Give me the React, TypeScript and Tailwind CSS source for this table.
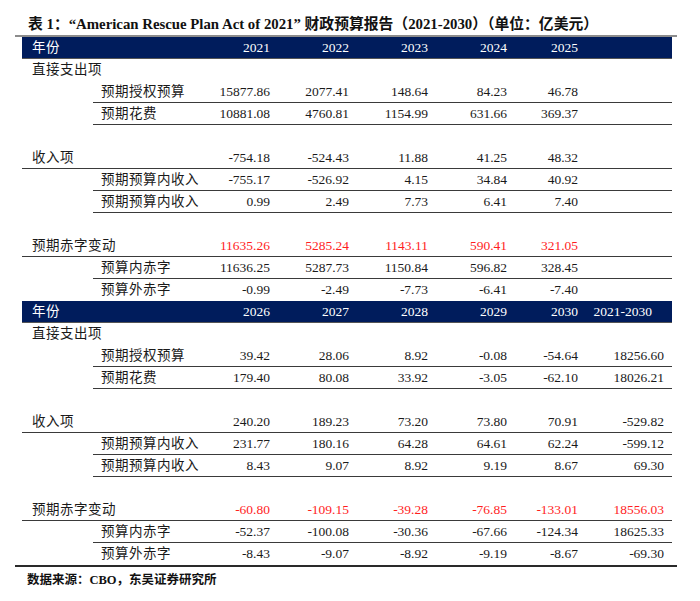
import React from "react";

type RowSpec = {
  label: string;
  values?: string[];
  kind: "top" | "sub" | "blank";
  line?: boolean;
  red?: boolean;
};

const FONT = "font-['Liberation_Serif','Noto_Sans_CJK_SC',serif]";

const COLS = ["w-[70px]", "w-[79px]", "w-[79px]", "w-[79px]", "w-[71px]", "w-[86px]"];

const table1: RowSpec[] = [
  { label: "直接支出项", kind: "top" },
  { label: "预期授权预算", kind: "sub", line: true, values: ["15877.86", "2077.41", "148.64", "84.23", "46.78"] },
  { label: "预期花费", kind: "sub", line: true, values: ["10881.08", "4760.81", "1154.99", "631.66", "369.37"] },
  { label: "", kind: "blank" },
  { label: "收入项", kind: "top", line: true, values: ["-754.18", "-524.43", "11.88", "41.25", "48.32"] },
  { label: "预期预算内收入", kind: "sub", line: true, values: ["-755.17", "-526.92", "4.15", "34.84", "40.92"] },
  { label: "预期预算内收入", kind: "sub", line: true, values: ["0.99", "2.49", "7.73", "6.41", "7.40"] },
  { label: "", kind: "blank" },
  { label: "预期赤字变动", kind: "top", line: true, red: true, values: ["11635.26", "5285.24", "1143.11", "590.41", "321.05"] },
  { label: "预算内赤字", kind: "sub", line: true, values: ["11636.25", "5287.73", "1150.84", "596.82", "328.45"] },
  { label: "预算外赤字", kind: "sub", values: ["-0.99", "-2.49", "-7.73", "-6.41", "-7.40"] },
];

const table2: RowSpec[] = [
  { label: "直接支出项", kind: "top" },
  { label: "预期授权预算", kind: "sub", line: true, values: ["39.42", "28.06", "8.92", "-0.08", "-54.64", "18256.60"] },
  { label: "预期花费", kind: "sub", line: true, values: ["179.40", "80.08", "33.92", "-3.05", "-62.10", "18026.21"] },
  { label: "", kind: "blank" },
  { label: "收入项", kind: "top", line: true, values: ["240.20", "189.23", "73.20", "73.80", "70.91", "-529.82"] },
  { label: "预期预算内收入", kind: "sub", line: true, values: ["231.77", "180.16", "64.28", "64.61", "62.24", "-599.12"] },
  { label: "预期预算内收入", kind: "sub", line: true, values: ["8.43", "9.07", "8.92", "9.19", "8.67", "69.30"] },
  { label: "", kind: "blank" },
  { label: "预期赤字变动", kind: "top", line: true, red: true, values: ["-60.80", "-109.15", "-39.28", "-76.85", "-133.01", "18556.03"] },
  { label: "预算内赤字", kind: "sub", line: true, values: ["-52.37", "-100.08", "-30.36", "-67.66", "-124.34", "18625.33"] },
  { label: "预算外赤字", kind: "sub", values: ["-8.43", "-9.07", "-8.92", "-9.19", "-8.67", "-69.30"] },
];

function Numbers({ values, red }: { values: string[]; red?: boolean }) {
  return (
    <>
      {COLS.map((w, i) => (
        <div key={i} className={`${w} shrink-0 text-right ${red ? "text-[#ff1e1e]" : ""}`}>
          {values[i] ?? ""}
        </div>
      ))}
    </>
  );
}

function Row({ row }: { row: RowSpec }) {
  if (row.kind === "blank") return <div className="h-[22px]" />;

  const isSub = row.kind === "sub";
  return (
    <div className="flex h-[22px]">
      {isSub && <div className="w-[71px] shrink-0" />}
      <div
        className={`flex flex-1 items-center ${row.line ? "border-b-[1.5px] border-[#3a3a3a]" : ""}`}
      >
        <div className={`${isSub ? "w-[107px] pl-[8px]" : "w-[178px] pl-[10px]"} shrink-0 tracking-[0.5px]`}>
          {row.label}
        </div>
        <Numbers values={row.values || []} red={row.red} />
      </div>
    </div>
  );
}

function Header({ years }: { years: string[] }) {
  return (
    <div className="flex h-[22px] items-center bg-[#001c5c] text-white border-b border-[#555]">
      <div className="w-[178px] shrink-0 pl-[10px] tracking-[0.5px]">年份</div>
      {COLS.map((w, i) => (
        <div key={i} className={`${w} shrink-0 text-right ${i === 5 ? "pr-[12px]" : ""}`}>
          {years[i] ?? ""}
        </div>
      ))}
    </div>
  );
}

export default function App() {
  return (
    <div className={`w-[700px] h-[601px] bg-white text-[#1a1a1a] ${FONT} overflow-hidden`}>
      <div className="h-[35px] pl-[28px] pt-[14px] text-[14.8px] font-bold leading-[20px] whitespace-nowrap text-[#111]">
        表 1：“American Rescue Plan Act of 2021” 财政预算报告（2021-2030）（单位：亿美元）
      </div>
      <div className="ml-[15px] w-[662px] h-[2px] bg-[#8c8c8c]" />

      <div className="ml-[22px] w-[650px] text-[13.5px] leading-[22px]">
        <Header years={["2021", "2022", "2023", "2024", "2025"]} />
        {table1.map((r, i) => (
          <Row key={`a${i}`} row={r} />
        ))}
        <Header years={["2026", "2027", "2028", "2029", "2030", "2021-2030"]} />
        {table2.map((r, i) => (
          <Row key={`b${i}`} row={r} />
        ))}
      </div>
      <div className="ml-[15px] w-[662px] h-[2px] bg-[#2a2a2a]" />

      <div className="pl-[27px] pt-[3px] text-[12.5px] font-bold leading-[20px] text-[#111]">
        数据来源：CBO，东吴证券研究所
      </div>
    </div>
  );
}
